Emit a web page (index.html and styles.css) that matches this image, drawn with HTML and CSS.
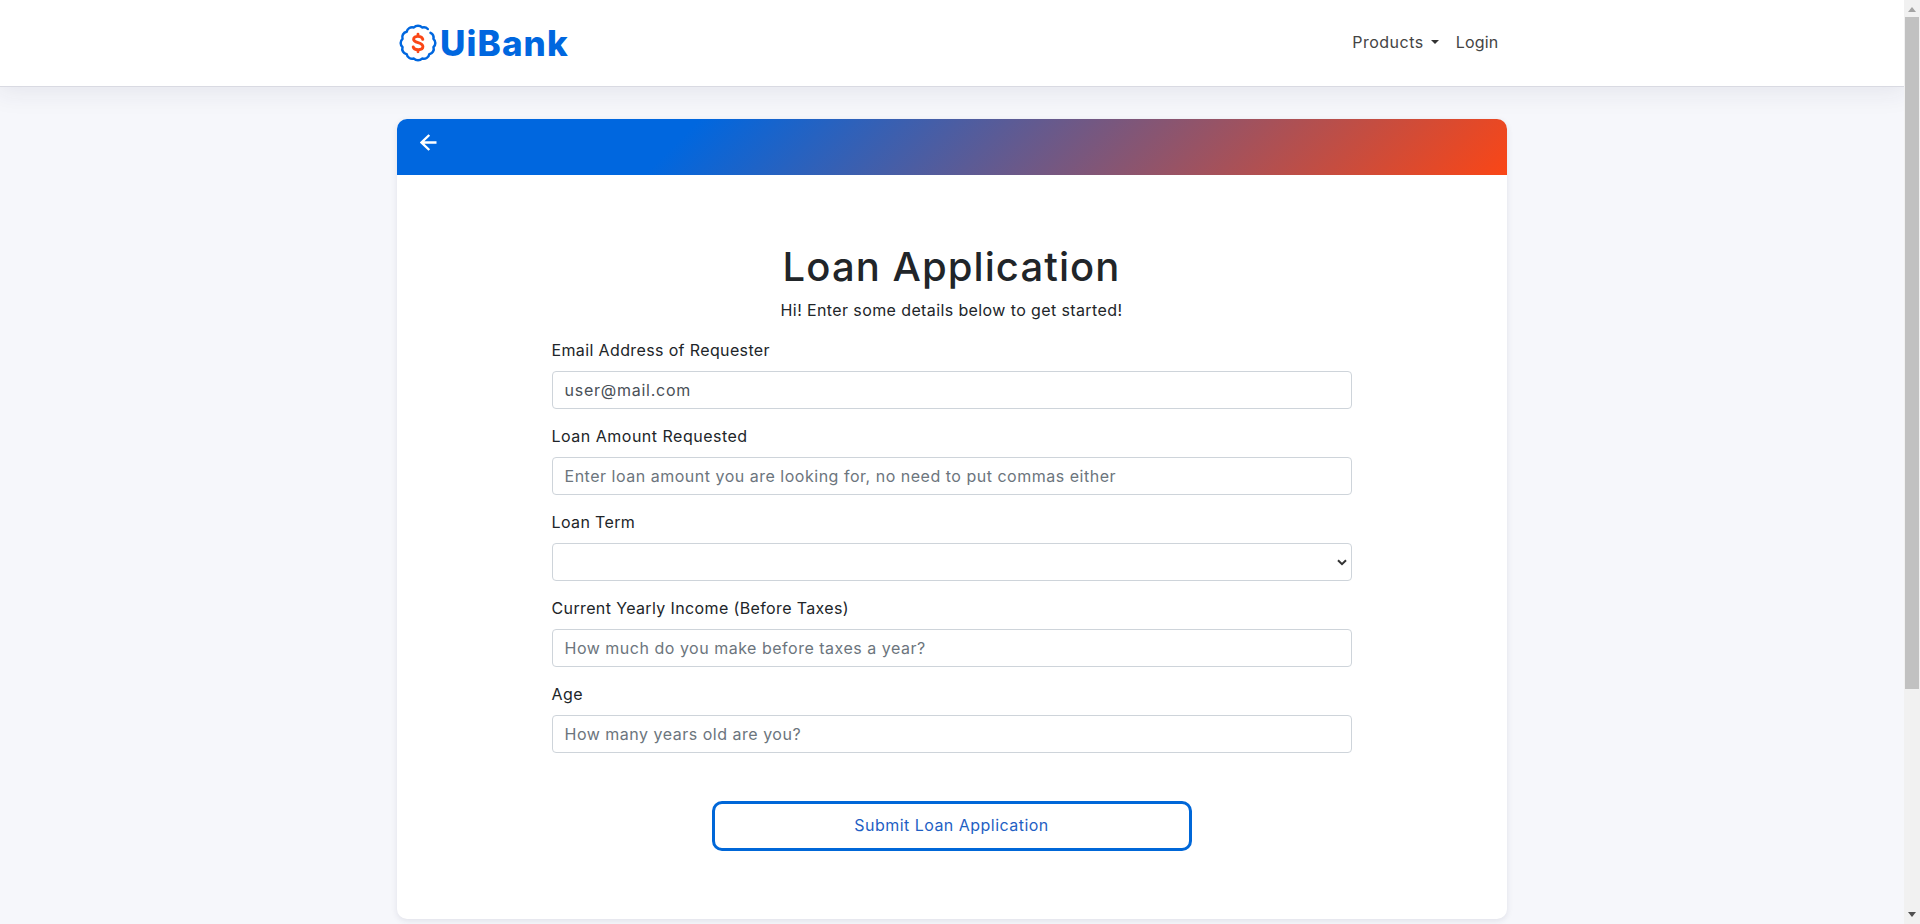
FILE: index.html
```html
<!DOCTYPE html>
<html lang="en">
<head>
<meta charset="utf-8">
<title>UiBank</title>
<link rel="stylesheet" href="styles.css">
</head>
<body>
<div class="viewport">
  <div class="page">
    <header class="navbar">
      <div class="container nav-inner">
        <a class="brand">
          <svg class="brand-mark" width="40" height="40" viewBox="0 0 40 40">
            <path class="seal" d="M32.500 9.900A5.500 5.500 0 0 1 35.450 15.860A5.500 5.500 0 0 1 35.450 24.140A5.500 5.500 0 0 1 31.310 31.310A5.500 5.500 0 0 1 24.140 35.450A5.500 5.500 0 0 1 15.860 35.450A5.500 5.500 0 0 1 8.690 31.310A5.500 5.500 0 0 1 4.550 24.140A5.500 5.500 0 0 1 4.550 15.860A5.500 5.500 0 0 1 8.690 8.690A5.500 5.500 0 0 1 15.860 4.550A5.500 5.500 0 0 1 24.140 4.550A5.500 5.500 0 0 1 29.800 6"/>
            <path class="dollar" d="M24.800 16.400C24 12.400 15.600 12.400 15.600 16.200C15.600 20.400 24.900 19 24.900 23.600C24.900 27.800 16 27.800 15.200 23.900M20 11.300V13M20 27.200V28.700"/>
          </svg>
          <span class="brand-name">UiBank</span>
        </a>
        <nav class="nav-links">
          <a class="nav-link products">Products<i class="caret"></i></a>
          <a class="nav-link login">Login</a>
        </nav>
      </div>
    </header>
    <main class="container">
      <section class="card">
        <div class="card-top">
          <svg class="back" width="17" height="17" viewBox="0 0 17 17"><path class="arrow" d="M16.500 8.500H1.500M9.300 1L1.500 8.500L9.300 16"/></svg>
        </div>
        <form class="card-body">
          <h1>Loan Application</h1>
          <p class="intro">Hi! Enter some details below to get started!</p>
          <div class="group"><label for="email">Email Address of Requester</label><input class="control email" id="email" value="user@mail.com"></div>
          <div class="group"><label class="wide" for="amount">Loan Amount Requested</label><input class="control" id="amount" placeholder="Enter loan amount you are looking for, no need to put commas either"></div>
          <div class="group"><label for="term">Loan Term</label>
            <div class="control select" id="term"><svg width="10" height="7" viewBox="0 0 10 7"><path class="chevron" d="M1 1.200L5 5.200L9 1.200"/></svg></div>
          </div>
          <div class="group"><label for="income">Current Yearly Income (Before Taxes)</label><input class="control" id="income" placeholder="How much do you make before taxes a year?"></div>
          <div class="group"><label class="wide" for="age">Age</label><input class="control" id="age" placeholder="How many years old are you?"></div>
          <button type="button" class="submit">Submit Loan Application</button>
        </form>
      </section>
    </main>
  </div>
  <div class="scrollbar">
    <svg width="8" height="5" viewBox="0 0 8 5"><path class="up" d="M0 5L4 0L8 5Z"/></svg>
    <div class="thumb"></div>
    <svg width="8" height="5" viewBox="0 0 8 5"><path class="down" d="M0 0L4 5L8 0Z"/></svg>
  </div>
</div>
</body>
</html>
```
FILE: styles.css
```css
* {
  box-sizing: border-box;
}

body {
  margin: 0;
  font: 400 16px/24px Inter, sans-serif;
  color: #212529;
}

.viewport {
  display: flex;
  height: 924px;
  overflow: hidden;
  background: #f6f7fb;
}

.page {
  width: 1904px;
  padding-right: 1px;
}

.container {
  width: 1110px;
  margin: 0 auto;
}

.navbar {
  height: 87px;
  margin-right: -1px;
  padding-right: 1px;
  background: #fff;
  border-bottom: 1px solid #d9dae2;
  box-shadow: 0 2px 24px 4px rgba(40, 40, 80, 0.08);
}

.nav-inner {
  display: flex;
  justify-content: space-between;
  padding-top: 23px;
}

.brand {
  display: flex;
  padding-left: 1.500px;
}

.brand-name {
  margin-left: 2px;
  font-weight: 800;
  font-size: 35px;
  line-height: 41px;
  letter-spacing: 1.100px;
  color: #0067df;
}

.seal,
.dollar {
  fill: none;
  stroke-linecap: round;
  stroke-linejoin: round;
}

.seal {
  stroke: #0067df;
  stroke-width: 2.500;
}

.dollar {
  stroke: #fa4616;
  stroke-width: 2.900;
}

.nav-links {
  display: flex;
  gap: 17px;
  padding: 7px 8px 0 0;
  color: #444;
}

.products {
  letter-spacing: 0.500px;
}

.login {
  letter-spacing: 0.200px;
}

.caret {
  display: inline-block;
  margin-left: 7px;
  vertical-align: 4px;
  border: 4.500px solid transparent;
  border-top-color: #333;
  border-bottom: 0;
}

.card {
  height: 800px;
  margin-top: 32px;
  background: #fff;
  border-radius: 10px;
  box-shadow: 0 2px 6px rgba(40, 40, 80, 0.1);
}

.card-top {
  height: 56px;
  padding: 15px 23.500px;
  background: linear-gradient(135deg, #0067df 26%, #fa4616);
  border-radius: 10px 10px 0 0;
}

.back {
  display: block;
}

.arrow {
  fill: none;
  stroke: #fff;
  stroke-width: 2.400;
}

.card-body {
  width: 800px;
  margin: 0 auto;
  padding-top: 68px;
}

h1 {
  margin: 0 0 7px;
  font-weight: 500;
  font-size: 40px;
  line-height: 48px;
  letter-spacing: 1.070px;
  text-align: center;
}

.intro {
  margin: 0 0 16px;
  letter-spacing: 0.390px;
  text-align: center;
}

.group {
  margin-bottom: 15px;
}

label {
  display: block;
  margin-bottom: 9px;
  letter-spacing: 0.370px;
}

.wide {
  letter-spacing: 0.500px;
}

.control {
  display: block;
  width: 100%;
  height: 38px;
  padding: 6px 12px;
  border: 1px solid #ced4da;
  border-radius: 4px;
  background: #fff;
  font: 400 16px/24px Inter, sans-serif;
  letter-spacing: 0.510px;
  color: #495057;
}

.control::placeholder {
  color: #6c757d;
  opacity: 1;
}

.email {
  letter-spacing: 0.750px;
}

.select {
  display: flex;
  align-items: center;
  justify-content: flex-end;
  padding: 0 4px 0 12px;
}

.chevron {
  fill: none;
  stroke: #333;
  stroke-width: 2;
}

.submit {
  display: block;
  width: 480px;
  height: 50px;
  margin: 48px auto 0;
  padding: 0 0 2px;
  border: 3px solid #0067d8;
  border-radius: 10px;
  background: #fff;
  font: 400 16px/24px Inter, sans-serif;
  letter-spacing: 0.470px;
  color: #1f5fc4;
}

.scrollbar {
  display: flex;
  flex-direction: column;
  align-items: center;
  width: 16px;
  padding: 7px 0;
  background: #f1f1f1;
  position: relative;
}

.thumb {
  width: 14px;
  height: 672px;
  margin: 5px 0 auto;
  background: #c1c1c1;
}

.up {
  fill: #a3a3a3;
}

.down {
  fill: #505050;
}
```
